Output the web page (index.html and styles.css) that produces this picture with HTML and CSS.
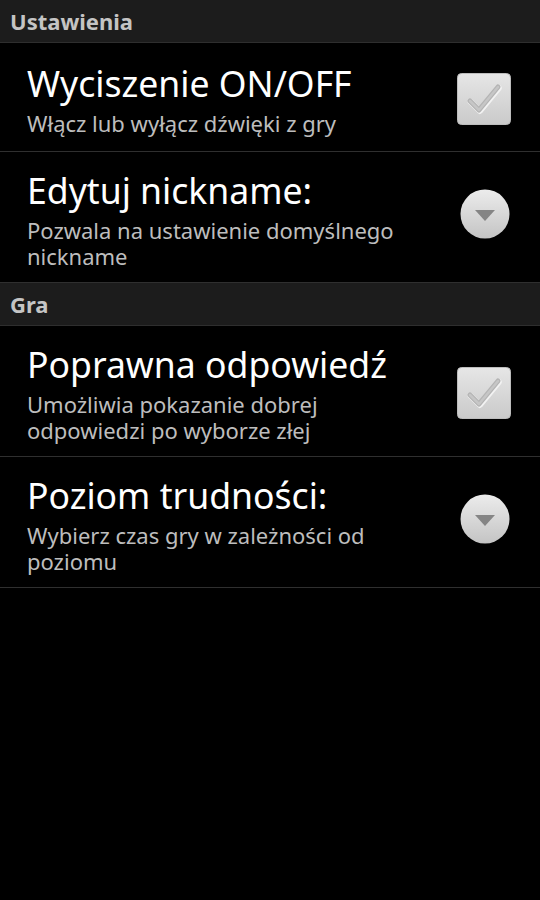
FILE: index.html
```html
<!DOCTYPE html>
<html lang="pl">
<head>
<meta charset="utf-8">
<link rel="stylesheet" href="styles.css">
</head>
<body>
<div class="screen">
  <div class="category">Ustawienia</div>
  <div class="pref">
    <div class="pref-text">
      <div class="pref-title">Wyciszenie ON/OFF</div>
      <div class="pref-summary">Włącz lub wyłącz dźwięki z gry</div>
    </div>
    <div class="widget">
      <svg class="checkbox" width="54" height="52" viewBox="0 0 54 52">
        <defs>
          <linearGradient id="cbg" x1="0" y1="0" x2="0" y2="1">
            <stop offset="0" stop-color="#e6e6e6"/>
            <stop offset="1" stop-color="#cacaca"/>
          </linearGradient>
        </defs>
        <rect x="0.5" y="0.5" width="53" height="51" rx="4" fill="url(#cbg)" stroke="#bdbdbd"/>
        <path d="M13 28 L22 37 L41 14" fill="none" stroke="#f2f2f2" stroke-width="6" stroke-linecap="round" stroke-linejoin="round" transform="translate(0.8,1)"/>
        <path d="M13 28 L22 37 L41 14" fill="none" stroke="#b4b4b4" stroke-width="5" stroke-linecap="round" stroke-linejoin="round"/>
        <path d="M13 28 L22 37 L41 14" fill="none" stroke="#c6c6c6" stroke-width="2.5" stroke-linecap="round" stroke-linejoin="round"/>
      </svg>
    </div>
  </div>
  <div class="pref">
    <div class="pref-text">
      <div class="pref-title">Edytuj nickname:</div>
      <div class="pref-summary">Pozwala na ustawienie domyślnego nickname</div>
    </div>
    <div class="widget">
      <svg class="dropdown" width="50" height="50" viewBox="0 0 50 50">
        <defs>
          <linearGradient id="ddg" x1="0" y1="0" x2="0" y2="1">
            <stop offset="0" stop-color="#ececec"/>
            <stop offset="1" stop-color="#c4c4c4"/>
          </linearGradient>
        </defs>
        <circle cx="25" cy="25" r="24.5" fill="url(#ddg)"/>
        <path d="M15 21 L35 21 L25 32 Z" fill="#858585"/>
      </svg>
    </div>
  </div>
  <div class="category">Gra</div>
  <div class="pref">
    <div class="pref-text">
      <div class="pref-title">Poprawna odpowiedź</div>
      <div class="pref-summary">Umożliwia pokazanie dobrej odpowiedzi po wyborze złej</div>
    </div>
    <div class="widget">
      <svg class="checkbox" width="54" height="52" viewBox="0 0 54 52">
        <defs>
          <linearGradient id="cbg2" x1="0" y1="0" x2="0" y2="1">
            <stop offset="0" stop-color="#e6e6e6"/>
            <stop offset="1" stop-color="#cacaca"/>
          </linearGradient>
        </defs>
        <rect x="0.5" y="0.5" width="53" height="51" rx="4" fill="url(#cbg2)" stroke="#bdbdbd"/>
        <path d="M13 28 L22 37 L41 14" fill="none" stroke="#f2f2f2" stroke-width="6" stroke-linecap="round" stroke-linejoin="round" transform="translate(0.8,1)"/>
        <path d="M13 28 L22 37 L41 14" fill="none" stroke="#b4b4b4" stroke-width="5" stroke-linecap="round" stroke-linejoin="round"/>
        <path d="M13 28 L22 37 L41 14" fill="none" stroke="#c6c6c6" stroke-width="2.5" stroke-linecap="round" stroke-linejoin="round"/>
      </svg>
    </div>
  </div>
  <div class="pref">
    <div class="pref-text">
      <div class="pref-title">Poziom trudności:</div>
      <div class="pref-summary">Wybierz czas gry w zależności od poziomu</div>
    </div>
    <div class="widget">
      <svg class="dropdown" width="50" height="50" viewBox="0 0 50 50">
        <defs>
          <linearGradient id="ddg2" x1="0" y1="0" x2="0" y2="1">
            <stop offset="0" stop-color="#ececec"/>
            <stop offset="1" stop-color="#c4c4c4"/>
          </linearGradient>
        </defs>
        <circle cx="25" cy="25" r="24.5" fill="url(#ddg2)"/>
        <path d="M15 21 L35 21 L25 32 Z" fill="#858585"/>
      </svg>
    </div>
  </div>
</div>
</body>
</html>
```

FILE: styles.css
```css
html, body {
  margin: 0;
  padding: 0;
  background: #000;
}
body {
  width: 540px;
  height: 900px;
  overflow: hidden;
  font-family: "Noto Sans", "Open Sans", "DejaVu Sans", sans-serif;
}
.screen {
  display: flex;
  flex-direction: column;
}
.category {
  height: 43px;
  box-sizing: border-box;
  padding-left: 10px;
  display: flex;
  align-items: center;
  background: #1c1c1c;
  border-bottom: 1px solid #2e2e2e;
  color: #c4c4c4;
  font-weight: bold;
  font-size: 22px;
  padding-bottom: 1px;
}
.pref {
  display: flex;
  align-items: center;
  box-sizing: border-box;
  min-height: 109px;
  padding: 17px 29px 13px 27px;
  border-bottom: 1px solid #2f2f2f;
}
.pref-text {
  flex: 0 0 405px;
}
.pref-title {
  color: #fff;
  font-size: 35.6px;
  line-height: 42px;
}
.pref-summary {
  color: #bdbdbd;
  font-size: 22px;
  line-height: 26px;
  margin-top: 6px;
}
.widget {
  margin-left: auto;
  display: flex;
  align-items: center;
}
.checkbox, .dropdown {
  display: block;
}
.dropdown {
  margin-right: 1px;
  margin-bottom: 10px;
}
```
